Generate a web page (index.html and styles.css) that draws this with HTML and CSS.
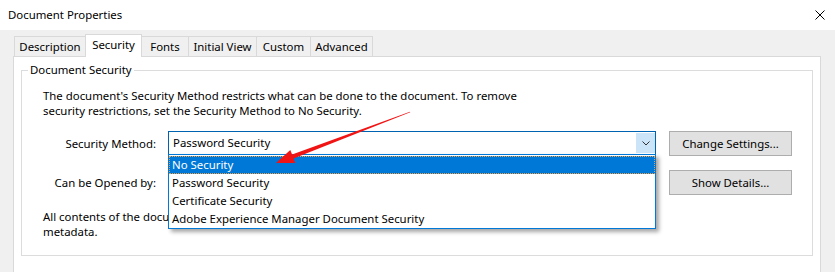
FILE: index.html
```html
<!DOCTYPE html>
<html lang="en">
<head>
  <meta charset="UTF-8" />
  <title>Document Properties</title>
  <link rel="stylesheet" href="styles.css">
</head>
<body>
  <div class="dialog">
    <div class="titlebar">
      <span class="title">Document Properties</span>
      <svg class="close" width="10" height="10" viewBox="0 0 10 10">
        <path d="M0.5 0.5 L9.5 9.5 M9.5 0.5 L0.5 9.5" stroke="#000" stroke-width="1" fill="none"/>
      </svg>
    </div>

    <div class="dialog-body">
      <div class="tabs">
        <div class="tab w-desc">Description</div>
        <div class="tab tab-active w-sec">Security</div>
        <div class="tab w-fonts">Fonts</div>
        <div class="tab w-view">Initial View</div>
        <div class="tab w-custom">Custom</div>
        <div class="tab w-adv">Advanced</div>
      </div>

      <div class="panel">
        <fieldset class="group">
          <legend>Document Security</legend>
          <p class="intro">The document's Security Method restricts what can be done to the document. To remove security restrictions, set the Security Method to No Security.</p>

          <div class="row row-method">
            <span class="label">Security Method:</span>
            <div class="combo">
              <span class="combo-value">Password Security</span>
              <span class="combo-btn">
                <svg width="8" height="5" viewBox="0 0 8 5"><path d="M0.5 0.5 L4 4 L7.5 0.5" stroke="#333" fill="none"/></svg>
              </span>
              <ul class="combo-list">
                <li class="selected">No Security</li>
                <li>Password Security</li>
                <li>Certificate Security</li>
                <li>Adobe Experience Manager Document Security</li>
              </ul>
            </div>
            <button class="btn">Change Settings...</button>
          </div>

          <div class="row row-opened">
            <span class="label">Can be Opened by:</span>
            <div class="spacer"></div>
            <button class="btn">Show Details...</button>
          </div>

          <p class="note">All contents of the document are encrypted and search engines will not be able to access the document's metadata.</p>
        </fieldset>
      </div>
    </div>

    <svg class="pointer" width="835" height="272" viewBox="0 0 835 272">
      <polygon fill="#f01414" points="410,111.7 410.2,112.3 293.5,158.6 295.3,163.1 276,163 290.3,150.1 292.1,154.6"/>
    </svg>
  </div>
</body>
</html>
```

FILE: styles.css
```css
body {
  margin: 0;
  font-family: "Noto Sans", "Open Sans", sans-serif;
  font-size: 11.4px;
  color: #000;
  background: #f0f0f0;
}

.dialog {
  position: relative;
  width: 835px;
  height: 272px;
  overflow: hidden;
  background: #f0f0f0;
}

.titlebar {
  height: 30px;
  background: #fff;
  display: flex;
  align-items: center;
  justify-content: space-between;
  padding: 0 10px 0 8px;
}

.title {
  line-height: 16px;
}

.close {
  margin-top: -1px;
}

.dialog-body {
  padding: 4px 14px 0 13px;
}

.tabs {
  display: flex;
  align-items: flex-end;
  height: 22px;
  padding-left: 1px;
  position: relative;
  z-index: 1;
}

.tab {
  box-sizing: border-box;
  height: 20px;
  border: 1px solid #d9d9d9;
  border-bottom: none;
  margin-left: -1px;
  text-align: center;
  line-height: 19px;
  background: #f0f0f0;
}

.tab:first-child {
  margin-left: 0;
}

.tab-active {
  height: 23px;
  background: #fff;
  margin-bottom: -1px;
  line-height: 19px;
  position: relative;
  z-index: 2;
}

.w-desc { width: 72px; }
.w-sec { width: 57px; }
.w-fonts { width: 48px; }
.w-view { width: 69px; }
.w-custom { width: 55px; }
.w-adv { width: 63px; }

.panel {
  background: #fff;
  border: 1px solid #d9d9d9;
  height: 240px;
  padding: 5px 7px 0 7px;
}

.group {
  margin: 0;
  height: 192px;
  border: 1px solid #dcdcdc;
  padding: 0 20px 0 21px;
}

.group legend {
  margin-left: -15px;
  padding: 0 2px;
  line-height: 16px;
}

.intro {
  margin: 10px 0 0 0;
  line-height: 15px;
  width: 490px;
}

.row {
  display: flex;
  align-items: center;
}

.row-method {
  margin-top: 13px;
  height: 25px;
}

.row-opened {
  margin-top: 14px;
  height: 25px;
}

.label {
  width: 113px;
  text-align: right;
  margin-right: 12px;
}

.combo {
  position: relative;
  box-sizing: border-box;
  width: 488px;
  height: 24px;
  border: 1px solid #0063b1;
  display: flex;
  align-items: stretch;
  margin-top: -1px;
}

.combo-value {
  flex: 1;
  padding-left: 4px;
  line-height: 21px;
}

.combo-btn {
  width: 19px;
  margin: 1px 0;
  background: #cce4f7;
  display: flex;
  align-items: center;
  justify-content: center;
}

.spacer {
  width: 488px;
}

.combo-list {
  position: absolute;
  left: -1px;
  top: 22px;
  width: 488px;
  box-sizing: border-box;
  margin: 0;
  padding: 1px 0 0 0;
  list-style: none;
  background: #fff;
  border: 1px solid #0078d7;
  box-shadow: 3px 3px 4px rgba(0, 0, 0, 0.35);
  z-index: 5;
}

.combo-list li {
  height: 18px;
  line-height: 17px;
  padding-left: 3px;
}

.combo-list .selected {
  background: #0078d7;
  color: #fff;
  outline: 1px dotted #f39c3c;
  outline-offset: -1px;
}

.btn {
  box-sizing: border-box;
  width: 123px;
  height: 25px;
  margin-left: 13px;
  background: #e1e1e1;
  border: 1px solid #adadad;
  border-radius: 0;
  font-family: inherit;
  font-size: 11.4px;
  color: #000;
  padding: 0;
}

.note {
  margin: 14px 0 0 0;
  line-height: 15px;
  width: 600px;
}

.pointer {
  position: absolute;
  left: 0;
  top: 0;
  z-index: 10;
  pointer-events: none;
}
```
